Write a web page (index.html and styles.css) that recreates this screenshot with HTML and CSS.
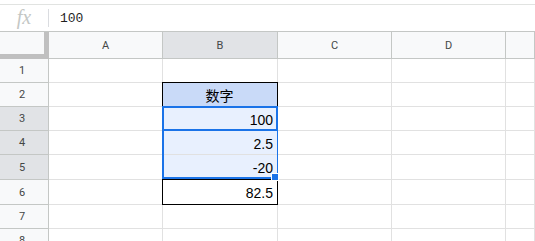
FILE: index.html
```html
<!DOCTYPE html>
<html lang="zh">
<head>
  <meta charset="UTF-8">
  <title>Sheet</title>
  <link rel="stylesheet" href="styles.css">
</head>
<body>
  <div class="formula-bar">
    <span class="fx">fx</span>
    <span class="fx-sep"></span>
    <span class="fx-value">100</span>
  </div>

  <div class="sheet">
    <div class="grid">
      <!-- header row -->
      <div class="corner"></div>
      <div class="col-head">A</div>
      <div class="col-head active">B</div>
      <div class="col-head">C</div>
      <div class="col-head">D</div>
      <div class="col-head"></div>

      <div class="row-head">1</div>
      <div class="cell"></div><div class="cell"></div><div class="cell"></div><div class="cell"></div><div class="cell"></div>

      <div class="row-head">2</div>
      <div class="cell"></div><div class="cell title">数字</div><div class="cell"></div><div class="cell"></div><div class="cell"></div>

      <div class="row-head active">3</div>
      <div class="cell"></div><div class="cell num sel">100</div><div class="cell"></div><div class="cell"></div><div class="cell"></div>

      <div class="row-head active">4</div>
      <div class="cell"></div><div class="cell num sel">2.5</div><div class="cell"></div><div class="cell"></div><div class="cell"></div>

      <div class="row-head active">5</div>
      <div class="cell"></div><div class="cell num sel">-20</div><div class="cell"></div><div class="cell"></div><div class="cell"></div>

      <div class="row-head">6</div>
      <div class="cell"></div><div class="cell num">82.5</div><div class="cell"></div><div class="cell"></div><div class="cell"></div>

      <div class="row-head">7</div>
      <div class="cell"></div><div class="cell"></div><div class="cell"></div><div class="cell"></div><div class="cell"></div>

      <div class="row-head">8</div>
      <div class="cell"></div><div class="cell"></div><div class="cell"></div><div class="cell"></div><div class="cell"></div>
    </div>

    <!-- borders and selection drawn over the grid -->
    <div class="box-border b2"></div>
    <div class="box-border b6"></div>
    <div class="range"></div>
    <div class="active-cell"></div>
    <div class="fill-handle"></div>
  </div>
</body>
</html>
```

FILE: styles.css
```css
body {
  margin: 0;
  background: #fff;
  font-family: Roboto, 'Liberation Sans', sans-serif;
  overflow: hidden;
}

.formula-bar {
  margin-top: 4px;
  height: 26px;
  border-top: 1px solid #e1e3e1;
  border-bottom: 1px solid #c4c7c5;
  display: flex;
  align-items: center;
}

.fx {
  width: 48px;
  text-align: center;
  font-family: 'Liberation Serif', serif;
  font-style: italic;
  font-size: 20px;
  color: #c4c7c5;
  margin-top: -2px;
}

.fx-sep {
  width: 1px;
  height: 18px;
  background: #dadce0;
}

.fx-value {
  margin-left: 11px;
  font-family: 'Liberation Mono', monospace;
  font-size: 13px;
  color: #1f1f1f;
}

.sheet {
  position: relative;
}

.grid {
  display: grid;
  grid-template-columns: 49px 114px 115px 114px 114px 1fr;
  grid-template-rows: 27px 24px 24px 24px 24px 25px 25px 24px 24px;
}

.grid > div {
  box-sizing: border-box;
}

.corner {
  background: #f8f9fa;
  border-right: 5px solid #c0c0c0;
  border-bottom: 5px solid #c0c0c0;
}

.col-head {
  background: #f8f9fa;
  border-right: 1px solid #c4c7c5;
  border-bottom: 1px solid #c4c7c5;
  font-size: 11px;
  color: #444746;
  display: flex;
  align-items: center;
  justify-content: center;
  padding-top: 1px;
}

.row-head {
  background: #f8f9fa;
  border-right: 1px solid #c4c7c5;
  border-bottom: 1px solid #c4c7c5;
  font-size: 11px;
  color: #444746;
  display: flex;
  align-items: center;
  justify-content: center;
  padding-right: 4px;
}

.col-head.active,
.row-head.active {
  background: #e1e3e6;
}

.cell {
  border-right: 1px solid #e1e1e1;
  border-bottom: 1px solid #e1e1e1;
  font-family: 'Liberation Sans', 'Noto Sans CJK SC', sans-serif;
  font-size: 14px;
  color: #000;
  display: flex;
  align-items: center;
  padding: 2px 4px 0 3px;
}

.cell.title {
  background: #c9daf8;
  justify-content: center;
  font-family: 'Noto Sans CJK SC', sans-serif;
  font-size: 14px;
  padding-top: 0;
}

.cell.num {
  justify-content: flex-end;
}

.cell.sel {
  background: #e8f0fe;
}

.box-border {
  position: absolute;
  left: 162px;
  width: 116px;
  box-sizing: border-box;
  border: 1px solid #000;
}

.b2 {
  top: 50px;
  height: 25px;
}

.b6 {
  top: 147px;
  height: 26px;
}

.range {
  position: absolute;
  left: 162px;
  top: 74px;
  width: 116px;
  height: 73px;
  box-sizing: border-box;
  border: 1px solid #1a73e8;
  border-left-width: 2px;
  border-bottom-width: 2px;
}

.active-cell {
  position: absolute;
  left: 162px;
  top: 74px;
  width: 116px;
  height: 25px;
  box-sizing: border-box;
  border: 2px solid #1a73e8;
}

.fill-handle {
  position: absolute;
  left: 271px;
  top: 141px;
  width: 6px;
  height: 6px;
  background: #1a73e8;
  border: 1px solid #fff;
}
```
